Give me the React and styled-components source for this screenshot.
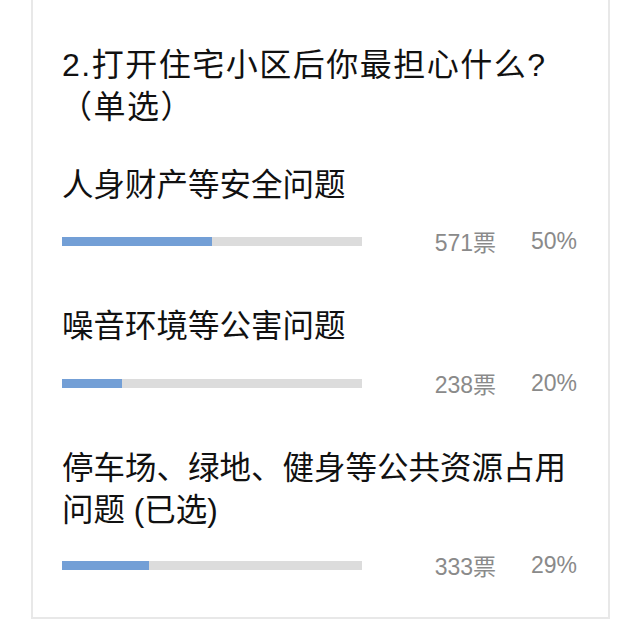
import React from 'react';
import styled, { createGlobalStyle } from 'styled-components';

const GlobalStyle = createGlobalStyle`
  html, body {
    margin: 0;
    padding: 0;
    background: #ffffff;
  }
  body {
    font-family: "Liberation Sans", "Noto Sans CJK SC", sans-serif;
    color: #111;
  }
`;

const Page = styled.div`
  width: 640px;
  height: 637px;
  overflow: hidden;
  background: #fff;
`;

const Card = styled.div`
  margin: 0 30px 0 31px;
  border-left: 2px solid #e8e8e8;
  border-right: 2px solid #e8e8e8;
  border-bottom: 2px solid #e8e8e8;
  background: #fff;
  padding: 44px 31px 47px 29px;
`;

const Title = styled.h2`
  margin: 0 0 36px;
  font-size: 32px;
  font-weight: 400;
  line-height: 42px;
  letter-spacing: 1.5px;
  color: #111;
  span {
    display: block;
    margin-left: -2px;
  }
`;

const Option = styled.div`
  & + & {
    margin-top: ${(p) => p.$gap || 55}px;
  }
`;

const Label = styled.div`
  font-size: 31.5px;
  line-height: 42px;
  color: #111;
  margin-bottom: ${(p) => p.$below || 30}px;
`;

const Row = styled.div`
  display: flex;
  align-items: center;
  height: 10px;
`;

const Track = styled.div`
  width: 300px;
  height: 9px;
  background: #dcdcdc;
  flex: none;
`;

const Fill = styled.div`
  height: 100%;
  background: #739fd6;
`;

const Votes = styled.span`
  margin-left: auto;
  font-size: 23px;
  color: #8a8a8a;
  white-space: nowrap;
`;

const Percent = styled.span`
  width: 81px;
  text-align: right;
  font-size: 23px;
  color: #8a8a8a;
  white-space: nowrap;
`;

const options = [
  { text: '人身财产等安全问题', votes: 571, pct: 50, gap: 0, below: 30 },
  { text: '噪音环境等公害问题', votes: 238, pct: 20, gap: 49, below: 31 },
  { text: '停车场、绿地、健身等公共资源占用问题 (已选)', votes: 333, pct: 29, gap: 59, below: 29 },
];

export default function App() {
  return (
    <Page>
      <GlobalStyle />
      <Card>
        <Title>
          2.打开住宅小区后你最担心什么?
          <span>（单选）</span>
        </Title>
        {options.map((o) => (
          <Option key={o.text} $gap={o.gap}>
            <Label $below={o.below}>{o.text}</Label>
            <Row>
              <Track>
                <Fill style={{ width: `${o.pct}%` }} />
              </Track>
              <Votes>{o.votes}票</Votes>
              <Percent>{o.pct}%</Percent>
            </Row>
          </Option>
        ))}
      </Card>
    </Page>
  );
}
